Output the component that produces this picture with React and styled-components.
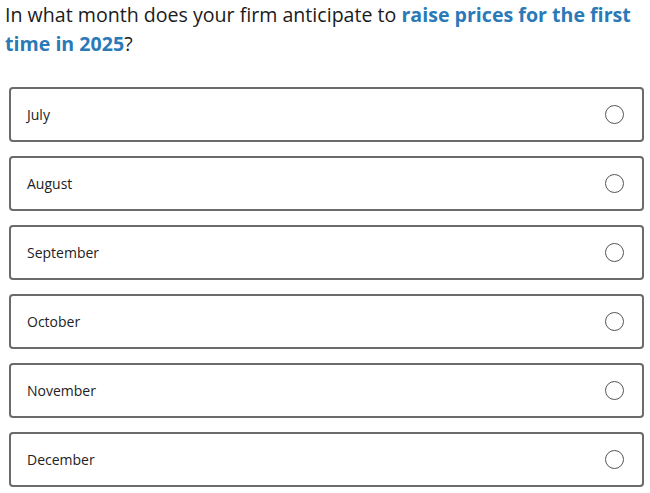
import styled, { createGlobalStyle } from "styled-components";

const GlobalStyle = createGlobalStyle`
  body {
    margin: 0;
    background: #fff;
    font-family: "Open Sans", "Noto Sans", sans-serif;
    color: #1a1a1a;
  }
`;

const Wrapper = styled.div`
  padding: 0 0 0 5px;
`;

const Question = styled.h1`
  margin: 0;
  font-size: 19.6px;
  font-weight: 400;
  line-height: 29px;
  color: #1b1b1b;
`;

const Highlight = styled.span`
  font-weight: 700;
  color: #2a7ab8;
`;

const Options = styled.div`
  display: flex;
  flex-direction: column;
  gap: 14px;
  margin-top: 29px;
  padding: 0 6px 0 4px;
`;

const Option = styled.label`
  display: flex;
  align-items: center;
  justify-content: space-between;
  height: 55px;
  box-sizing: border-box;
  border: 2px solid #6b6b6b;
  border-radius: 4px;
  padding: 0 18px 0 16px;
  cursor: pointer;
  font-size: 14px;
  color: #222;
`;

const Radio = styled.span`
  width: 19px;
  height: 19px;
  box-sizing: border-box;
  border: 1.5px solid #555;
  border-radius: 50%;
`;

const months = ["July", "August", "September", "October", "November", "December"];

const App = () => {
  return (
    <Wrapper>
      <GlobalStyle />
      <Question>
        In what month does your firm anticipate to{" "}
        <Highlight>raise prices for the first time in 2025</Highlight>?
      </Question>
      <Options>
        {months.map((m) => (
          <Option key={m}>
            <span>{m}</span>
            <Radio />
          </Option>
        ))}
      </Options>
    </Wrapper>
  );
};

export default App;
